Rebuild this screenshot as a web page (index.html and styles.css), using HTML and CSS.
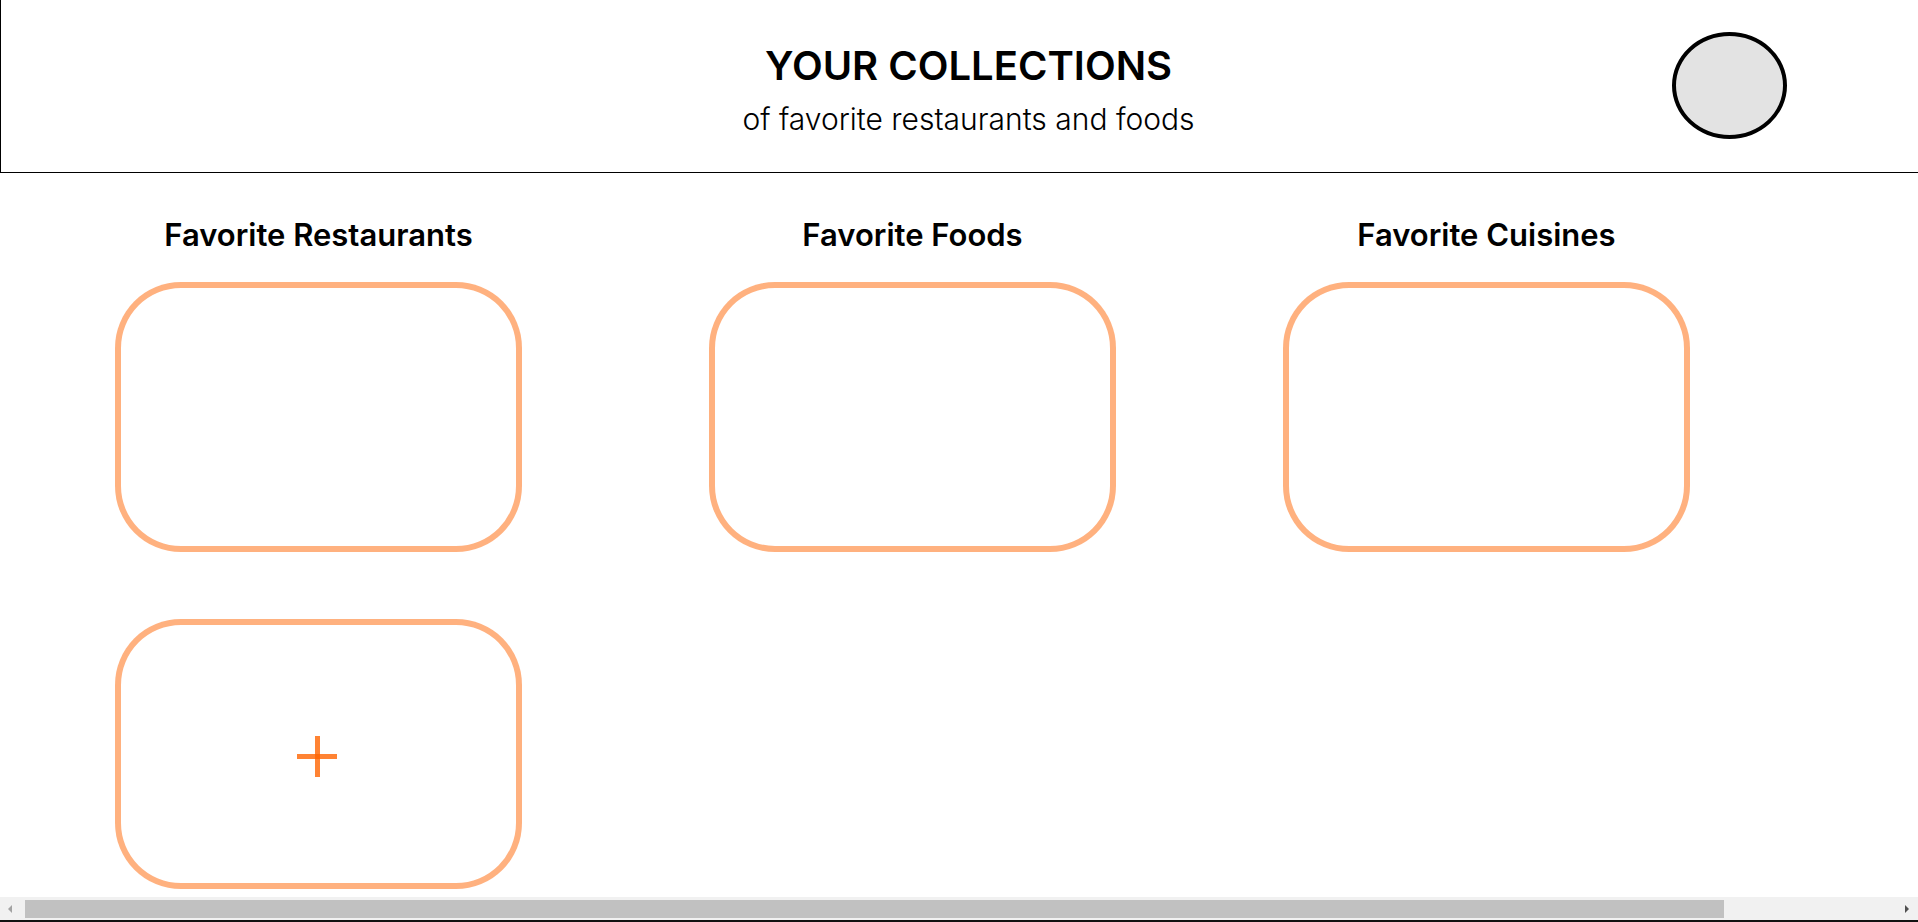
FILE: index.html
```html
<!DOCTYPE html>
<html lang="en">
<head>
<meta charset="utf-8">
<title>Your Collections</title>
<link rel="stylesheet" href="styles.css">
</head>
<body>
<div class="page">
  <header class="site-header">
    <h1 class="site-title">YOUR COLLECTIONS</h1>
    <p class="site-subtitle">of favorite restaurants and foods</p>
    <div class="avatar" aria-label="profile"></div>
  </header>

  <main class="collections">
    <section class="collection">
      <h2 class="collection-title">Favorite Restaurants</h2>
      <div class="card"></div>
      <button class="card card-add" aria-label="Add collection">
        <span class="plus-h"></span>
        <span class="plus-v"></span>
      </button>
    </section>
    <section class="collection">
      <h2 class="collection-title">Favorite Foods</h2>
      <div class="card"></div>
    </section>
    <section class="collection">
      <h2 class="collection-title">Favorite Cuisines</h2>
      <div class="card"></div>
    </section>
  </main>
</div>

<div class="hscroll">
  <span class="hscroll-arrow hscroll-left"></span>
  <div class="hscroll-thumb"></div>
  <span class="hscroll-arrow hscroll-right"></span>
</div>
</body>
</html>
```

FILE: styles.css
```css
html, body {
  margin: 0;
  padding: 0;
  background: #ffffff;
  overflow: hidden;
}

body {
  font-family: "Inter", "Noto Sans", sans-serif;
  color: #000000;
}

.page {
  width: 1936px;
}

.site-header {
  position: relative;
  box-sizing: border-box;
  height: 173px;
  border-left: 1px solid #000000;
  border-bottom: 1px solid #000000;
  padding-top: 42px;
  text-align: center;
}

.site-title {
  margin: 0;
  font-size: 40px;
  font-weight: 600;
  line-height: 48px;
}

.site-subtitle {
  margin: 11px 0 0;
  font-size: 30px;
  font-weight: 300;
  line-height: 36px;
}

.avatar {
  position: absolute;
  left: 1671px;
  top: 32px;
  box-sizing: border-box;
  width: 115px;
  height: 107px;
  border: 4px solid #000000;
  border-radius: 50%;
  background: #e3e3e3;
}

.collections {
  display: grid;
  grid-template-columns: 594px 574px 407px;
  justify-items: start;
  padding-left: 115px;
  padding-top: 44px;
}

.collection {
  width: 407px;
  display: flex;
  flex-direction: column;
}

.collection-title {
  margin: 0;
  font-size: 31px;
  font-weight: 600;
  text-align: center;
  line-height: 36px;
}

.card {
  box-sizing: border-box;
  width: 407px;
  height: 270px;
  margin-top: 29px;
  border: 6px solid rgba(255, 100, 0, 0.5);
  border-radius: 66px;
  background: #ffffff;
}

.card-add {
  position: relative;
  margin-top: 67px;
  padding: 0;
  display: block;
  cursor: pointer;
}

.plus-h,
.plus-v {
  position: absolute;
  background: rgba(255, 100, 0, 0.8);
}

.plus-h {
  left: 176px;
  top: 129px;
  width: 40px;
  height: 5px;
}

.plus-v {
  left: 194px;
  top: 111px;
  width: 5px;
  height: 41px;
}

.hscroll {
  position: fixed;
  left: 0;
  right: 0;
  bottom: 0;
  height: 23px;
  background: #f1f1f1;
  border-bottom: 2px solid #111111;
  box-sizing: content-box;
}

.hscroll-thumb {
  position: absolute;
  left: 25px;
  top: 3px;
  width: 1699px;
  height: 18px;
  background: #c1c1c1;
}

.hscroll-arrow {
  position: absolute;
  top: 8px;
  width: 0;
  height: 0;
  border-top: 4px solid transparent;
  border-bottom: 4px solid transparent;
}

.hscroll-left {
  left: 8px;
  border-right: 4px solid #a3a3a3;
}

.hscroll-right {
  right: 9px;
  border-left: 4px solid #505050;
}
```
